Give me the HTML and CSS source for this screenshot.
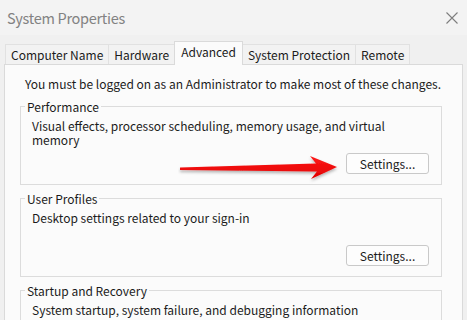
FILE: index.html
```html
<!DOCTYPE html>
<html>
<head>
<meta charset="utf-8">
<link rel="stylesheet" href="styles.css">
</head>
<body>
<div class="window">
  <div class="titlebar">
    <span class="title">System Properties</span>
    <svg class="close" width="14" height="14" viewBox="0 0 14 14"><path d="M1.5 1.5 L12.5 12.5 M12.5 1.5 L1.5 12.5" stroke="#7d7d7d" stroke-width="1.1" fill="none"/></svg>
  </div>
  <div class="tabs">
    <div class="tab">Computer Name</div>
    <div class="tab">Hardware</div>
    <div class="tab active">Advanced</div>
    <div class="tab">System Protection</div>
    <div class="tab">Remote</div>
  </div>
  <div class="panel">
    <p class="intro">You must be logged on as an Administrator to make most of these changes.</p>
    <fieldset class="group">
      <legend>Performance</legend>
      <p class="desc">Visual effects, processor scheduling, memory usage, and virtual<br>memory</p>
      <div class="actions"><button class="btn">Settings...</button></div>
    </fieldset>
    <fieldset class="group">
      <legend>User Profiles</legend>
      <p class="desc">Desktop settings related to your sign-in</p>
      <div class="actions"><button class="btn">Settings...</button></div>
    </fieldset>
    <fieldset class="group group-last">
      <legend>Startup and Recovery</legend>
      <p class="desc">System startup, system failure, and debugging information</p>
    </fieldset>
  </div>
  <svg class="arrow" width="170" height="36" viewBox="0 0 170 36">
    <defs>
      <filter id="sh" x="-10%" y="-40%" width="120%" height="180%">
        <feDropShadow dx="0" dy="2" stdDeviation="1.6" flood-color="#000" flood-opacity="0.3"/>
      </filter>
      <linearGradient id="rg" x1="0" y1="0" x2="0" y2="1">
        <stop offset="0" stop-color="#ff1a1a"/>
        <stop offset="1" stop-color="#e00000"/>
      </linearGradient>
    </defs>
    <polygon filter="url(#sh)" fill="url(#rg)" points="2,15.5 138,11.5 132,4 159,15 133,27 139,19.5 2,18"/>
  </svg>
</div>
</body>
</html>
```
FILE: styles.css
```css
html, body {
  margin: 0;
  padding: 0;
}
body {
  background: #f0f0f0;
  font-family: "Noto Sans CJK JP", "Liberation Sans", sans-serif;
  font-size: 12px;
  color: #1b1b1b;
  width: 467px;
  height: 320px;
  overflow: hidden;
}
.window {
  position: relative;
  height: 320px;
}
.titlebar {
  height: 35px;
  display: flex;
  align-items: center;
  justify-content: space-between;
  padding: 0 8px 0 7px;
  background: #f3f3f3;
}
.title {
  font-size: 14.5px;
  letter-spacing: -0.3px;
  color: #828282;
  line-height: 18px;
}
.close {
  display: block;
}
.tabs {
  display: flex;
  align-items: flex-end;
  height: 24px;
  margin-top: 6px;
  margin-bottom: -1px;
  padding-left: 5px;
  position: relative;
  z-index: 1;
}
.tab {
  box-sizing: border-box;
  height: 20px;
  margin-bottom: 1px;
  padding: 0 5px;
  border: 1px solid #e1e1e1;
  border-bottom: none;
  background: #f2f2f2;
  line-height: 19px;
  white-space: nowrap;
  margin-right: -1px;
}
.tab.active {
  height: 24px;
  margin-bottom: 0;
  background: #fbfbfb;
  border-color: #dadada;
  line-height: 20px;
  padding: 0 6px;
  position: relative;
  z-index: 2;
}
.panel {
  margin: 0 4px;
  border: 1px solid #dadada;
  background: #fbfbfb;
  height: 300px;
  box-sizing: border-box;
}
.intro {
  margin: 0;
  padding: 11px 0 0 20px;
  line-height: 16px;
  height: 16px;
  white-space: nowrap;
}
.group {
  margin: 7px 20px 0 15px;
  padding: 5px 12px 10px 11px;
  border: 1px solid #dcdcdc;
  min-width: 0;
}
.group + .group {
  margin-top: 6px;
}
.group-last {
  margin-top: 6px !important;
}
.group legend {
  padding: 0 2px;
  margin-left: -7px;
  line-height: 15px;
}
.desc {
  margin: 0;
  line-height: 14px;
  min-height: 28px;
}
.group-last .desc {
  min-height: 14px;
}
.actions {
  display: flex;
  justify-content: flex-end;
  margin-top: 6px;
}
.btn {
  width: 83px;
  height: 21px;
  border: 1px solid #c9c9c9;
  border-radius: 3px;
  background: #fdfdfd;
  font-family: inherit;
  font-size: 12px;
  color: #1b1b1b;
  padding: 0;
  line-height: 19px;
}
.arrow {
  position: absolute;
  left: 178px;
  top: 152px;
}
```
